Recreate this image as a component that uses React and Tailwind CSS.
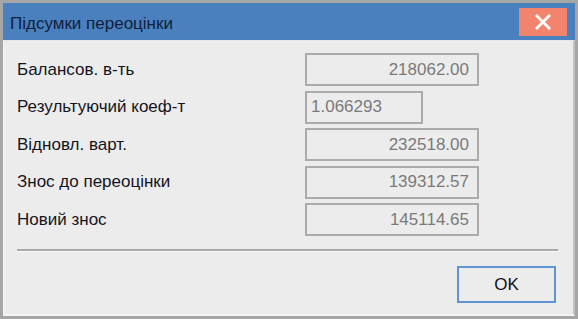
import React from 'react';

const rows = [
  { label: 'Балансов. в-ть', value: '218062.00', wide: true },
  { label: 'Результуючий коеф-т', value: '1.066293', wide: false },
  { label: 'Відновл. варт.', value: '232518.00', wide: true },
  { label: 'Знос до переоцінки', value: '139312.57', wide: true },
  { label: 'Новий знос', value: '145114.65', wide: true },
];

const App = () => {
  return (
    <div
      className="w-[578px] h-[319px] bg-[#a6a6a6] pt-[3px] pl-[3px] pr-[3px] pb-[3px] flex flex-col"
      style={{ fontFamily: '"Liberation Sans", Arial, sans-serif' }}
    >
      {/* Заголовок */}
      <div className="h-[37px] bg-[#4a80be] flex items-start justify-between shrink-0">
        <span className="pl-[7px] pt-[11px] text-[17px] leading-[20px] text-[#10203c]">
          Підсумки переоцінки
        </span>
        <button className="mt-[5px] mr-[8px] w-[48px] h-[28px] bg-[#f2846e] flex items-center justify-center">
          <svg width="16" height="16" viewBox="0 0 16 16">
            <path d="M2 2 L14 14 M14 2 L2 14" stroke="#ffffff" strokeWidth="2.8" strokeLinecap="square" />
          </svg>
        </button>
      </div>

      {/* Вміст */}
      <div className="flex-1 bg-[#ececec] border-t border-t-[#dfe6ee] border-l border-l-[#f7f7f7] border-r-2 border-r-[#c2c2c2] border-b-2 border-b-[#f5f5f5] flex flex-col pl-[13px] pr-[15px] pt-[12px]">
        <div className="flex flex-col gap-y-[4.5px]">
          {rows.map((row) => (
            <div key={row.label} className="flex items-center h-[33px]">
              <span className="w-[288px] text-[17px] text-[#14141e]">{row.label}</span>
              <div
                className={`h-[33px] border-2 border-[#ababab] flex items-center text-[17px] text-[#7a7a7a] ${
                  row.wide ? 'w-[174px] justify-end pr-[8px]' : 'w-[118px] justify-start pl-[4px]'
                }`}
              >
                {row.value}
              </div>
            </div>
          ))}
        </div>

        <div className="mt-[13px] h-[3px] border-t-2 border-t-[#a9a9a9] border-b border-b-[#fafafa]" />

        <div className="flex justify-end pt-[14px] pr-[2px]">
          <button className="w-[99px] h-[37px] border-2 border-[#5f93d3] text-[17px] text-[#111] flex items-center justify-center">
            OK
          </button>
        </div>
      </div>
    </div>
  );
};

export default App;
